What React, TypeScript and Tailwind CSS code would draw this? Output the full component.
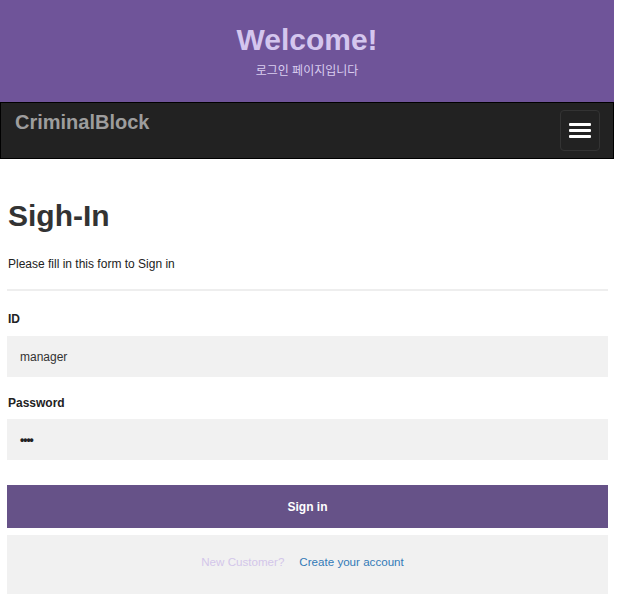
import React from "react";

const font = { fontFamily: '"Liberation Sans", Arial, "Noto Sans CJK KR", sans-serif' };

export default function App() {
  return (
    <div className="w-[614px] bg-white text-[#333333]" style={font}>
      <header className="h-[102px] bg-[#6f5499] flex flex-col items-center pt-[23px]">
        <h1 className="text-[30px] leading-[34px] font-bold text-[#d4c6ee]">Welcome!</h1>
        <p
          className="mt-[6px] text-[12px] leading-[17px] text-[#d9cdef]"
          style={{ fontFamily: '"Liberation Sans", "Noto Sans CJK KR", sans-serif' }}
        >
          로그인 페이지입니다
        </p>
      </header>
      <nav className="h-[57px] bg-[#222222] border border-black flex items-start justify-between">
        <span className="pl-[14px] pt-[8px] text-[20px] leading-[23px] font-bold text-[#9d9d9d]">
          CriminalBlock
        </span>
        <button className="mt-[7px] mr-[13px] w-[40px] h-[41px] rounded-[4px] border border-[#333333] flex flex-col items-center justify-center gap-[3px]">
          <span className="block w-[22px] h-[3px] bg-white rounded-[1px]" />
          <span className="block w-[22px] h-[3px] bg-white rounded-[1px]" />
          <span className="block w-[22px] h-[3px] bg-white rounded-[1px]" />
        </button>
      </nav>
      <main className="pl-[7px] pr-[6px] pt-[40px]">
        <h2 className="text-[30px] leading-[34px] font-bold text-[#333333] pl-[1px]">Sigh-In</h2>
        <p className="mt-[24px] text-[12px] leading-[14px] pl-[1px] text-[#222222]">
          Please fill in this form to Sign in
        </p>
        <div className="mt-[18px] h-[2px] bg-[#eeeeee]" />
        <label className="block mt-[21px] text-[12px] leading-[14px] font-bold pl-[1px] text-[#222222]">
          ID
        </label>
        <div className="mt-[10px] h-[41px] bg-[#f1f1f1] flex items-center pl-[13px] text-[12px] text-[#333333]">
          manager
        </div>
        <label className="block mt-[19px] text-[12px] leading-[14px] font-bold pl-[1px] text-[#222222]">
          Password
        </label>
        <div className="mt-[9px] h-[41px] bg-[#f1f1f1] flex items-center pl-[13px] text-[12px] text-[#222222] font-bold tracking-[-1px]">
          ••••
        </div>
        <button className="mt-[25px] w-full h-[43px] bg-[#665288] text-white text-[12px] font-bold">
          Sign in
        </button>
        <div className="mt-[7px] h-[62px] bg-[#f1f1f1] flex justify-center items-start pt-[20px] text-[11.6px] leading-[14px] pr-[10px]">
          <span className="text-[#d3c6ea]">New Customer?</span>
          <a className="ml-[15px] text-[#337ab7]" href="#">
            Create your account
          </a>
        </div>
      </main>
    </div>
  );
}
